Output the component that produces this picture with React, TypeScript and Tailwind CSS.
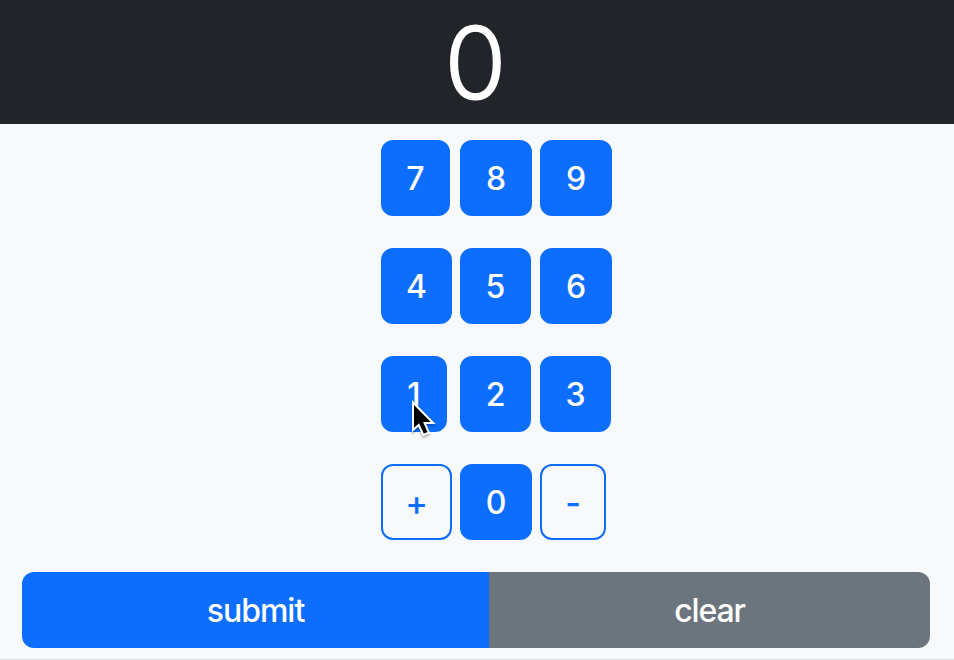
import React from "react";

type Key = { label: string; width: string; outline?: boolean };

const rows: Key[][] = [
  [
    { label: "7", width: "w-[69px]" },
    { label: "8", width: "w-[72px]" },
    { label: "9", width: "w-[72px]" },
  ],
  [
    { label: "4", width: "w-[71px]" },
    { label: "5", width: "w-[71px]" },
    { label: "6", width: "w-[72px]" },
  ],
  [
    { label: "1", width: "w-[66px]" },
    { label: "2", width: "w-[71px]" },
    { label: "3", width: "w-[71px]" },
  ],
  [
    { label: "+", width: "w-[71px]", outline: true },
    { label: "0", width: "w-[72px]" },
    { label: "-", width: "w-[66px]", outline: true },
  ],
];

function KeyButton({ label, width, outline }: Key) {
  const tone = outline
    ? "border-[#0d6efd] text-[#0d6efd] text-[34px]"
    : "border-[#0d6efd] bg-[#0d6efd] text-white text-[32px]";
  return (
    <button
      className={`flex h-19 items-center justify-center rounded-xl border-2 font-medium leading-none ${width} ${tone}`}
    >
      <span className="pt-0.5">{label}</span>
    </button>
  );
}

function Pointer() {
  return (
    <svg
      className="absolute left-[410px] top-[398px] drop-shadow-[0_2px_1px_rgba(0,0,0,0.3)]"
      width="28"
      height="42"
      viewBox="0 0 28 42"
    >
      <path
        d="M3 4.5V32L8.7 27L13.3 37L18.8 34.6L14.6 25H23.2Z"
        fill="#000"
        stroke="#fff"
        strokeWidth="2"
      />
    </svg>
  );
}

export default function App() {
  return (
    <div className="relative flex h-[660px] w-[954px] flex-col overflow-hidden border-b border-[#dfe0e6] bg-[#f8f9fa] font-['Inter',sans-serif]">
      <header className="flex h-31 shrink-0 items-center justify-center bg-[#212529] text-[101px] font-light leading-none text-white">
        <span className="pr-[3px] pt-px [-webkit-text-stroke:1.2px_white]">0</span>
      </header>
      <main className="flex flex-col gap-8 pl-[381px] pt-4">
        {rows.map((row, i) => (
          <div key={i} className="grid grid-cols-[79px_80px_72px]">
            {row.map((key) => (
              <KeyButton key={key.label} {...key} />
            ))}
          </div>
        ))}
      </main>
      <footer className="ml-[22px] mt-8 flex h-19 w-[908px] shrink-0 overflow-hidden rounded-xl text-[32px] font-medium leading-none text-white">
        <button className="w-[467px] bg-[#0d6efd] pt-0.5 tracking-[-0.032em]">submit</button>
        <button className="flex-1 bg-[#6c757d] pt-0.5 tracking-[-0.035em]">clear</button>
      </footer>
      <Pointer />
    </div>
  );
}
